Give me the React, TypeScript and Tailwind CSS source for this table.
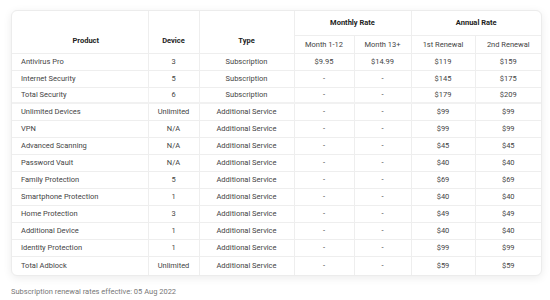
import React from 'react';

interface Row {
  product: string;
  device: string;
  type: string;
  m1: string;
  m13: string;
  r1: string;
  r2: string;
}

const rows: Row[] = [
  { product: 'Antivirus Pro', device: '3', type: 'Subscription', m1: '$9.95', m13: '$14.99', r1: '$119', r2: '$159' },
  { product: 'Internet Security', device: '5', type: 'Subscription', m1: '-', m13: '-', r1: '$145', r2: '$175' },
  { product: 'Total Security', device: '6', type: 'Subscription', m1: '-', m13: '-', r1: '$179', r2: '$209' },
  { product: 'Unlimited Devices', device: 'Unlimited', type: 'Additional Service', m1: '-', m13: '-', r1: '$99', r2: '$99' },
  { product: 'VPN', device: 'N/A', type: 'Additional Service', m1: '-', m13: '-', r1: '$99', r2: '$99' },
  { product: 'Advanced Scanning', device: 'N/A', type: 'Additional Service', m1: '-', m13: '-', r1: '$45', r2: '$45' },
  { product: 'Password Vault', device: 'N/A', type: 'Additional Service', m1: '-', m13: '-', r1: '$40', r2: '$40' },
  { product: 'Family Protection', device: '5', type: 'Additional Service', m1: '-', m13: '-', r1: '$69', r2: '$69' },
  { product: 'Smartphone Protection', device: '1', type: 'Additional Service', m1: '-', m13: '-', r1: '$40', r2: '$40' },
  { product: 'Home Protection', device: '3', type: 'Additional Service', m1: '-', m13: '-', r1: '$49', r2: '$49' },
  { product: 'Additional Device', device: '1', type: 'Additional Service', m1: '-', m13: '-', r1: '$40', r2: '$40' },
  { product: 'Identity Protection', device: '1', type: 'Additional Service', m1: '-', m13: '-', r1: '$99', r2: '$99' },
  { product: 'Total Adblock', device: 'Unlimited', type: 'Additional Service', m1: '-', m13: '-', r1: '$59', r2: '$59' },
];

export default function App() {
  return (
    <div className="w-[550px] h-[300px] bg-white pt-[10px] pl-[11px] font-['Roboto',sans-serif]">
      <div className="w-[531px] rounded-md border border-[#ececec] bg-white shadow-[0_2px_8px_rgba(0,0,0,0.08)] overflow-hidden">
        <table className="w-full table-fixed border-collapse text-[7.5px] leading-[11px] text-[#444]">
          <colgroup>
            <col className="w-[136px]" />
            <col className="w-[51px]" />
            <col className="w-[95px]" />
            <col className="w-[60px]" />
            <col className="w-[57px]" />
            <col className="w-[64px]" />
            <col />
          </colgroup>
          <thead>
            <tr className="h-[24px]">
              <th rowSpan={2} className="align-bottom pb-[7px] pl-[12px] font-bold text-[#222] text-center border-b border-r border-[#eee]">Product</th>
              <th rowSpan={2} className="align-bottom pb-[7px] font-bold text-[#222] text-center border-b border-r border-[#eee]">Device</th>
              <th rowSpan={2} className="align-bottom pb-[7px] font-bold text-[#222] text-center border-b border-r border-[#eee]">Type</th>
              <th colSpan={2} className="font-bold text-[#222] text-center border-b border-r border-[#eee]">Monthly Rate</th>
              <th colSpan={2} className="font-bold text-[#222] text-center border-b border-[#eee]">Annual Rate</th>
            </tr>
            <tr className="h-[18px]">
              <th className="font-normal text-center border-b border-r border-[#eee]">Month 1-12</th>
              <th className="font-normal text-center border-b border-r border-[#eee]">Month 13+</th>
              <th className="font-normal text-center border-b border-r border-[#eee]">1st Renewal</th>
              <th className="font-normal text-center border-b border-[#eee]">2nd Renewal</th>
            </tr>
          </thead>
          <tbody>
            {rows.map((r, i) => {
              const last = i === rows.length - 1;
              const sep = i === 2 ? 'border-b-2 border-[#f1f1f1]' : last ? '' : 'border-b border-[#eee]';
              const h = last ? 'h-[19px]' : i === 2 ? 'h-[16px]' : 'h-[17px]';
              return (
                <tr key={r.product} className={h}>
                  <td className={`pl-[9px] text-left border-r border-[#eee] ${sep}`}>{r.product}</td>
                  <td className={`text-center border-r border-[#eee] ${sep}`}>{r.device}</td>
                  <td className={`text-center border-r border-[#eee] ${sep}`}>{r.type}</td>
                  <td className={`text-center border-r border-[#eee] ${sep}`}>{r.m1}</td>
                  <td className={`text-center border-r border-[#eee] ${sep}`}>{r.m13}</td>
                  <td className={`text-center border-r border-[#eee] ${sep}`}>{r.r1}</td>
                  <td className={`text-center ${sep}`}>{r.r2}</td>
                </tr>
              );
            })}
          </tbody>
        </table>
      </div>
      <p className="mt-[10px] text-[7.5px] leading-[11px] text-[#777]">Subscription renewal rates effective: 05 Aug 2022</p>
    </div>
  );
}
